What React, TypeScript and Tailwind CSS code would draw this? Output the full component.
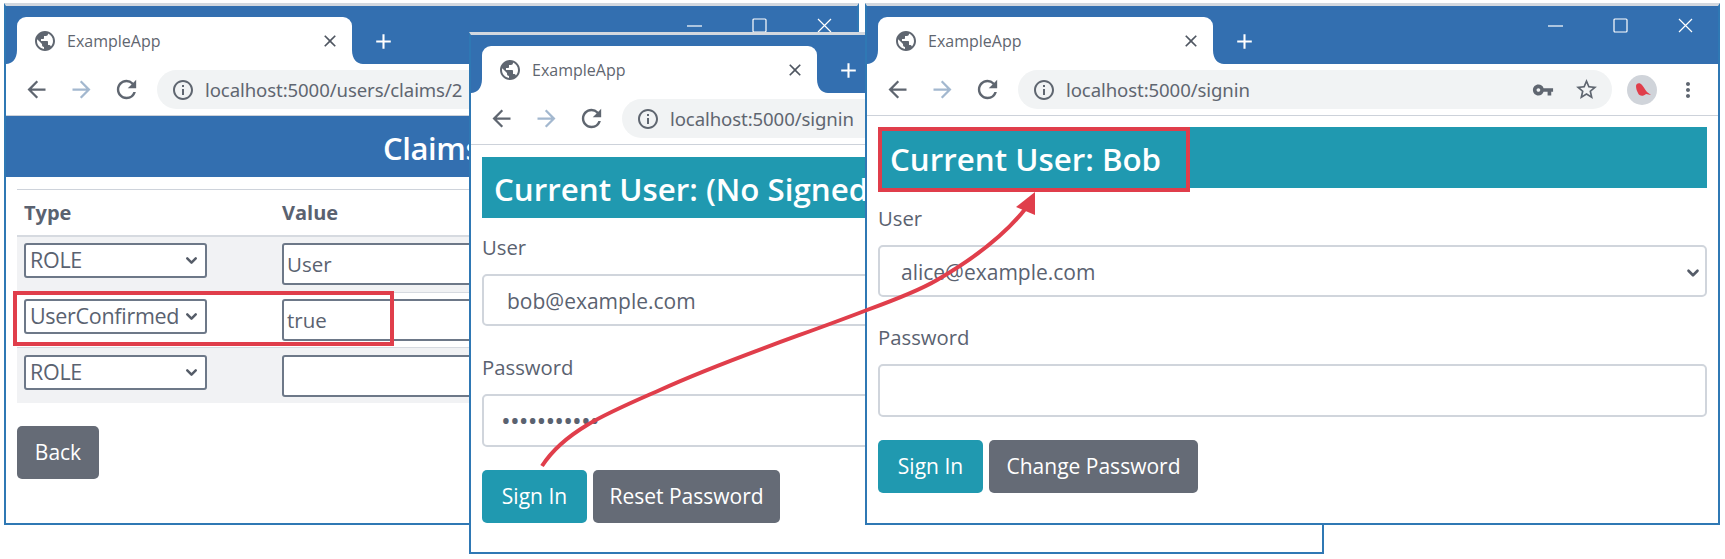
import React from "react";
import { ChevronDown } from "lucide-react";
import { MdPublic, MdInfoOutline, MdRefresh, MdVpnKey, MdStarBorder, MdMoreVert, MdClose, MdAdd, MdArrowBack, MdArrowForward } from "react-icons/md";

function TabFlare({ side }: { side: "left" | "right" }) {
  return side === "left" ? (
    <svg width="11" height="14" viewBox="0 0 11 14" className="absolute bottom-0 left-[-11px]">
      <path d="M11 0V14H0C6 14 11 9 11 0Z" fill="#fff" />
    </svg>
  ) : (
    <svg width="11" height="14" viewBox="0 0 11 14" className="absolute bottom-0 right-[-11px]">
      <path d="M0 0V14H11C5 14 0 9 0 0Z" fill="#fff" />
    </svg>
  );
}

function WindowControls() {
  return (
    <div className="ml-auto flex self-start pt-[2px]">
      <div className="flex h-[34px] w-[65px] items-center justify-center pt-[1px]">
        <svg width="15" height="2" viewBox="0 0 15 2"><path d="M0 1H15" stroke="#fff" strokeWidth="1.2" /></svg>
      </div>
      <div className="flex h-[34px] w-[65px] items-center justify-center">
        <svg width="15" height="15" viewBox="0 0 15 15"><rect x="1" y="1" width="13" height="13" rx="1" fill="none" stroke="#fff" strokeWidth="1.2" /></svg>
      </div>
      <div className="flex h-[34px] w-[65px] items-center justify-center">
        <svg width="15" height="15" viewBox="0 0 15 15"><path d="M1 1L14 14M14 1L1 14" stroke="#fff" strokeWidth="1.2" /></svg>
      </div>
    </div>
  );
}

function BrowserWindow({ pos, url, children }: { pos: string; url: string; children: React.ReactNode }) {
  return (
    <div className={`absolute flex h-[522px] w-[855px] flex-col border-2 border-t-[3px] border-[#2f78b4] border-t-[#d3d8df] bg-white ${pos}`}>
      <div className="flex h-[58px] shrink-0 items-end bg-[#336fb0] pl-[11px]">
        <div className="relative flex h-[47px] w-[335px] items-center rounded-t-[9px] bg-white pl-[16px] pr-[12px] pt-[1px]">
          <TabFlare side="left" />
          <TabFlare side="right" />
          <MdPublic size={24} className="shrink-0 text-[#5f6670]" />
          <span className="ml-[10px] text-[16px] text-[#5f6670]">ExampleApp</span>
          <MdClose size={20} className="ml-auto text-[#4f5661]" />
        </div>
        <div className="flex h-[47px] w-[62px] items-center justify-center pt-[1px] text-white">
          <MdAdd size={25} />
        </div>
        <WindowControls />
      </div>
      <div className="flex h-[52px] shrink-0 items-center border-b border-[#cdd2da] pl-[8px]">
        <div className="flex h-[40px] w-[45px] items-center justify-center"><MdArrowBack size={27} className="text-[#5f6670]" /></div>
        <div className="flex h-[40px] w-[45px] items-center justify-center"><MdArrowForward size={27} className="text-[#a3b8cf]" /></div>
        <div className="flex h-[40px] w-[45px] items-center justify-center"><MdRefresh size={29} className="text-[#5f6670]" /></div>
        <div className="ml-[8px] flex h-[39px] w-[594px] items-center rounded-full bg-[#f1f3f4] pl-[14px] pr-[13px]">
          <MdInfoOutline size={24} className="text-[#5f6670]" />
          <span className="ml-[10px] font-['Noto_Sans'] text-[18.6px] tracking-[-0.1px] text-[#5f6670]">{url}</span>
          <MdVpnKey size={22} className="ml-auto text-[#5f6670]" />
          <MdStarBorder size={25} className="ml-[20px] text-[#5f6670]" />
        </div>
        <div className="ml-[15px] flex h-[30px] w-[30px] items-center justify-center rounded-full bg-[#d0d4da]">
          <svg width="18" height="16" viewBox="0 0 18 16">
            <path d="M3 4C3 1 7 0 9 3C11 5 12 8 14 10L18 13L13 12C10 15 6 14 5 11C4 9 3 7 3 4Z" fill="#e03e4b" />
          </svg>
        </div>
        <MdMoreVert size={24} className="ml-[19px] text-[#5f6670]" />
      </div>
      {children}
    </div>
  );
}

function Select({ value }: { value: string }) {
  return (
    <div className="flex h-[35px] w-[183px] items-center rounded-[3px] border-2 border-[#6d7888] bg-white pl-[4px] pr-[5px] text-[21.5px] text-[#5a6270]">
      <span className="whitespace-nowrap tracking-[-0.3px]">{value}</span>
      <ChevronDown size={17} strokeWidth={3.5} className="ml-auto shrink-0 text-[#555c68]" />
    </div>
  );
}

function TextBox({ value }: { value: string }) {
  return (
    <div className="flex h-[42px] w-[400px] items-center rounded-[3px] border-2 border-[#6d7888] bg-white pl-[3px] pt-[1px] text-[20.5px] text-[#5a6270]">
      {value}
    </div>
  );
}

function ClaimRow({ type, value, shaded, classes }: { type: string; value: string; shaded?: boolean; classes: string }) {
  return (
    <div className={`flex gap-[75px] pl-[7px] ${classes} ${shaded ? "bg-[#f1f2f4]" : "bg-white"}`}>
      <Select value={type} />
      <TextBox value={value} />
    </div>
  );
}

function ClaimsPage() {
  return (
    <div className="flex flex-col">
      <div className="flex h-[61px] items-center justify-center bg-[#336fb0] pt-[3px] text-[31px] font-semibold tracking-[-0.4px] text-white">Claims</div>
      <div className="mx-[11px] mt-[12px] border-t border-[#ced3db]">
        <div className="flex h-[47px] items-center gap-[75px] border-b-2 border-[#d6dae0] pl-[7px] text-[20px] font-bold text-[#5a6270]">
          <span className="w-[183px]">Type</span>
          <span>Value</span>
        </div>
        <ClaimRow type="ROLE" value="User" shaded classes="h-[56px] border-b border-[#d6dae0] pt-[6px]" />
        <ClaimRow type="UserConfirmed" value="true" classes="h-[55px] border-b border-[#d6dae0] pt-[6px]" />
        <ClaimRow type="ROLE" value="" shaded classes="h-[55px] pt-[7px]" />
      </div>
      <div className="mx-[11px] mt-[23px] flex h-[53px] w-[82px] items-center justify-center rounded-[5px] bg-[#656b76] pt-[1px] text-[21px] text-white">Back</div>
    </div>
  );
}

function SignInPage({ user, heading, select, inputPad, password, secondary, secondaryWidth, headGap, passGap }: { user: string; heading: string; select?: boolean; inputPad: string; password: string; secondary: string; secondaryWidth: string; headGap: string; passGap: string }) {
  return (
    <div className="flex flex-col px-[11px] text-[20.3px] text-[#5a6270]">
      <div className={`flex h-[61px] items-center whitespace-nowrap bg-[#2099b0] pl-[12px] pt-[3px] text-[31.3px] font-semibold text-white ${headGap}`}>{heading}</div>
      <div className="flex h-[30px] items-center">User</div>
      <div className={`mt-[12px] flex h-[52px] items-center rounded-[5px] border-2 border-[#d0d5dc] pr-[3px] pt-[3px] text-[21px] ${inputPad}`}>
        <span>{user}</span>
        {select ? <ChevronDown size={18} strokeWidth={3.5} className="ml-auto text-[#555c68]" /> : null}
      </div>
      <div className={`flex h-[30px] items-center ${passGap}`}>Password</div>
      <div className="mt-[12px] flex h-[53px] items-center rounded-[5px] border-2 border-[#d0d5dc] pl-[17px] text-[26px] tracking-[-0.9px]">{password}</div>
      <div className="mt-[23px] flex gap-[6px] text-[21px] text-white">
        <div className="flex h-[53px] w-[105px] items-center justify-center rounded-[5px] bg-[#2099b0] pt-[1px]">Sign In</div>
        <div className={`flex h-[53px] items-center justify-center rounded-[5px] bg-[#656b76] pt-[1px] ${secondaryWidth}`}>{secondary}</div>
      </div>
    </div>
  );
}

export default function App() {
  return (
    <div className="relative h-[559px] w-[1725px] overflow-hidden bg-white font-['Open_Sans',sans-serif]">
      <BrowserWindow pos="left-[4px] top-[3px]" url="localhost:5000/users/claims/2">
        <ClaimsPage />
      </BrowserWindow>
      <BrowserWindow pos="left-[469px] top-[32px]" url="localhost:5000/signin">
        <SignInPage user="bob@example.com" heading="Current User: (No Signed In)" inputPad="pl-[23px]" password="•••••••••••" secondary="Reset Password" secondaryWidth="w-[187px]" headGap="mt-[12px] mb-[14px]" passGap="mt-[26px]" />
      </BrowserWindow>
      <BrowserWindow pos="left-[865px] top-[3px]" url="localhost:5000/signin">
        <SignInPage user="alice@example.com" heading="Current User: Bob" select inputPad="pl-[21px]" password="" secondary="Change Password" secondaryWidth="w-[209px]" headGap="mt-[11px] mb-[15px]" passGap="mt-[25px]" />
      </BrowserWindow>

      <div className="absolute left-[13px] top-[291px] h-[55px] w-[381px] border-4 border-[#e03e4b]" />
      <div className="absolute left-[878px] top-[127px] h-[65px] w-[312px] border-4 border-[#e03e4b]" />
      <svg className="absolute left-0 top-0" width="1725" height="559" viewBox="0 0 1725 559" fill="none">
        <path d="M542 466C565 430 610 412 660 390C730 358 800 336 867 310C900 298 920 290 937 280C975 258 1005 235 1026 208" stroke="#e03e4b" strokeWidth="4" />
        <path d="M1035 192L1016 207L1035 215Z" fill="#e03e4b" />
      </svg>
    </div>
  );
}
